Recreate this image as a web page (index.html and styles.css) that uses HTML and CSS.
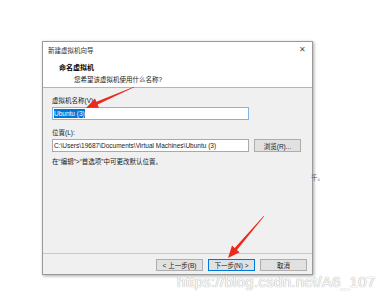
FILE: index.html
```html
<!DOCTYPE html>
<html>
<head>
    <title>新建虚拟机向导</title>
    <link rel="stylesheet" href="styles.css">
</head>
<body>
    <div class="page">
        <div class="dialog">
            <div class="title-bar">
                <span class="title">新建虚拟机向导</span>
                <span class="close">✕</span>
            </div>
            <div class="header">
                <div class="header-title">命名虚拟机</div>
                <div class="header-sub">您希望该虚拟机使用什么名称?</div>
            </div>
            <div class="content">
                <div class="label">虚拟机名称(V):</div>
                <div class="field focused"><span class="selected">Ubuntu (3)</span></div>
                <div class="label gap">位置(L):</div>
                <div class="row">
                    <div class="field">C:\Users\19687\Documents\Virtual Machines\Ubuntu (3)</div>
                    <div class="btn browse">浏览(R)...</div>
                </div>
                <div class="note">在“编辑”&gt;“首选项”中可更改默认位置。</div>
            </div>
            <div class="footer">
                <div class="btn">&lt; 上一步(B)</div>
                <div class="btn default">下一步(N) &gt;</div>
                <div class="btn">取消</div>
            </div>
        </div>
        <div class="behind-text">千。</div>

        <!-- annotations drawn over the screenshot -->
        <svg class="arrows" width="387" height="299" viewBox="0 0 387 299">
            <polygon fill="#ec2a1c" points="134.1,87.3 97.6,104.6 99,107.8 86,108 95,98.6 96.4,101.8 133.9,86.7"/>
            <polygon fill="#ec2a1c" points="264.2,216.2 236.9,249.9 239.6,252.2 228,258 232,245.6 234.7,247.9 263.8,215.8"/>
        </svg>
        <div class="watermark">https://blog.csdn.net/A6_107</div>
    </div>
</body>
</html>
```

FILE: styles.css
```css
body {
    margin: 0;
    background: #ffffff;
    font-family: "Liberation Sans", "Noto Sans CJK SC", sans-serif;
    font-size: 6.5px;
    color: #1a1a1a;
}
.page {
    position: relative;
    width: 387px;
    height: 299px;
    padding: 41px 0 0 42px;
    box-sizing: border-box;
    overflow: hidden;
}
.dialog {
    position: relative;
    width: 269px;
    height: 232px;
    border: 1px solid #9a9a9a;
    background: #f0f0f0;
    box-shadow: 1px 1px 3px rgba(0,0,0,0.35);
    display: flex;
    flex-direction: column;
}
.title-bar {
    height: 15px;
    background: #ffffff;
    display: flex;
    align-items: center;
    justify-content: space-between;
    padding: 0 6px 0 5px;
}
.title {
    color: #333;
}
.close {
    font-size: 8px;
    color: #555;
}
.header {
    height: 31px;
    background: #ffffff;
    border-bottom: 1px solid #b4b4b4;
    padding: 5px 0 0 16px;
    box-sizing: border-box;
}
.header-title {
    font-weight: bold;
    font-size: 7px;
    color: #000;
}
.header-sub {
    margin: 2px 0 0 15px;
    color: #222;
}
.content {
    flex: 1;
    padding: 8px 0 0 9px;
}
.label {
    line-height: 9px;
    margin-bottom: 2px;
}
.label.gap {
    margin-top: 8px;
}
.field {
    width: 197px;
    height: 13px;
    box-sizing: border-box;
    border: 1px solid #a9a9a9;
    background: #ffffff;
    padding: 0 1px;
    line-height: 11px;
    white-space: nowrap;
    overflow: hidden;
}
.field.focused {
    border-color: #7eb4ea;
}
.selected {
    background: #0078d7;
    color: #ffffff;
    padding: 1px 0;
}
.row {
    display: flex;
    gap: 5px;
}
.btn {
    width: 47px;
    height: 12px;
    box-sizing: border-box;
    border: 1px solid #adadad;
    background: #e1e1e1;
    display: flex;
    align-items: center;
    justify-content: center;
    color: #222;
}
.browse {
    height: 13px;
}
.note {
    margin-top: 4px;
}
.footer {
    height: 21px;
    border-top: 1px solid #c8c8c8;
    display: flex;
    align-items: flex-start;
    justify-content: flex-end;
    gap: 5px;
    padding: 5px 5px 0 0;
    box-sizing: border-box;
}
.btn.default {
    border: 1px solid #0078d7;
    box-shadow: inset 0 0 0 1px #cde4f7;
}
.arrows {
    position: absolute;
    left: 0;
    top: 0;
}
.behind-text {
    position: absolute;
    left: 311px;
    top: 172px;
    color: #555;
}
.watermark {
    position: absolute;
    left: 177px;
    top: 273px;
    font-size: 15px;
    font-family: "Liberation Sans", sans-serif;
    color: rgba(255,255,255,0.95);
    text-shadow: 0 0 1px #b0b0b0, 0 0 1px #b0b0b0;
    letter-spacing: 0.3px;
}
```
